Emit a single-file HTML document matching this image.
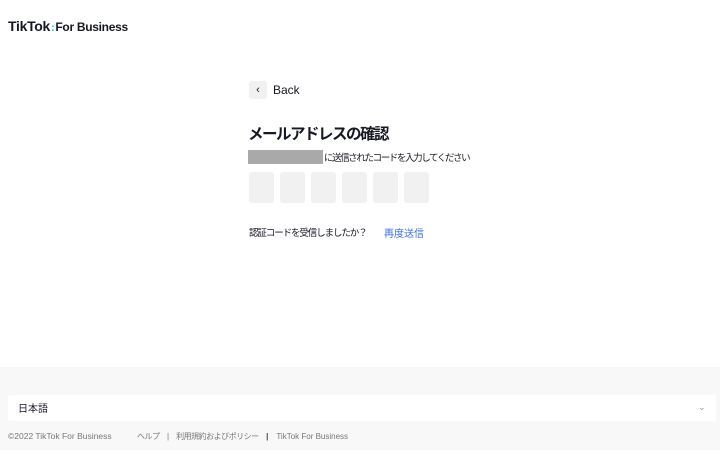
<!DOCTYPE html>
<html><head><meta charset="utf-8"><style>
body{margin:0;width:720px;height:450px;position:relative;background:#fff;font-family:"Liberation Sans","Noto Sans CJK JP",sans-serif;color:#161823;overflow:hidden}
.a{position:absolute;white-space:nowrap}
.box{position:absolute;top:172px;width:25px;height:31px;background:#f1f1f2;border-radius:3px}
</style></head><body>
<div class="a" style="left:8px;top:18px;font-size:14px;font-weight:bold;letter-spacing:-0.3px">TikTok<span style="color:#25c9d0;font-size:11px;margin:0 1px">:</span><span style="font-size:12px">For Business</span></div>
<div class="a" style="left:249px;top:81px;width:18px;height:18px;background:#f1f1f2;border-radius:3px;font-size:11px;text-align:center;line-height:18px">‹</div>
<div class="a" style="left:273px;top:83px;font-size:12px">Back</div>
<div class="a" style="left:248px;top:122px;font-size:15.5px;font-weight:bold;letter-spacing:-1.5px">メールアドレスの確認</div>
<div class="a" style="left:248px;top:150px;width:75px;height:14px;background:#a9a9a9"></div>
<div class="a" style="left:324px;top:150px;font-size:9.5px;letter-spacing:-1.4px">に送信されたコードを入力してください</div>
<div class="box" style="left:249px"></div><div class="box" style="left:280px"></div><div class="box" style="left:311px"></div><div class="box" style="left:342px"></div><div class="box" style="left:373px"></div><div class="box" style="left:404px"></div>
<div class="a" style="left:249px;top:225px;font-size:9.5px;letter-spacing:-1.1px">認証コードを受信しましたか？</div>
<div class="a" style="left:384px;top:225px;font-size:10px;color:#3a6df0">再度送信</div>
<div class="a" style="left:0;top:367px;width:720px;height:83px;background:#f8f8f8"></div>
<div class="a" style="left:8px;top:395px;width:708px;height:26px;background:#fff;border-radius:2px"></div>
<div class="a" style="left:18px;top:400px;font-size:10px">日本語</div>
<div class="a" style="left:698px;top:402px;font-size:9px;color:#999">⌄</div>
<div class="a" style="left:8px;top:431px;font-size:8.5px;color:#777">©2022 TikTok For Business</div>
<div class="a" style="left:137px;top:431px;font-size:8px;color:#777"><span style="letter-spacing:-0.5px">ヘルプ　|　利用規約およびポリシー　</span><b style="color:#444">|</b>　TikTok For Business</div>
</body></html>
